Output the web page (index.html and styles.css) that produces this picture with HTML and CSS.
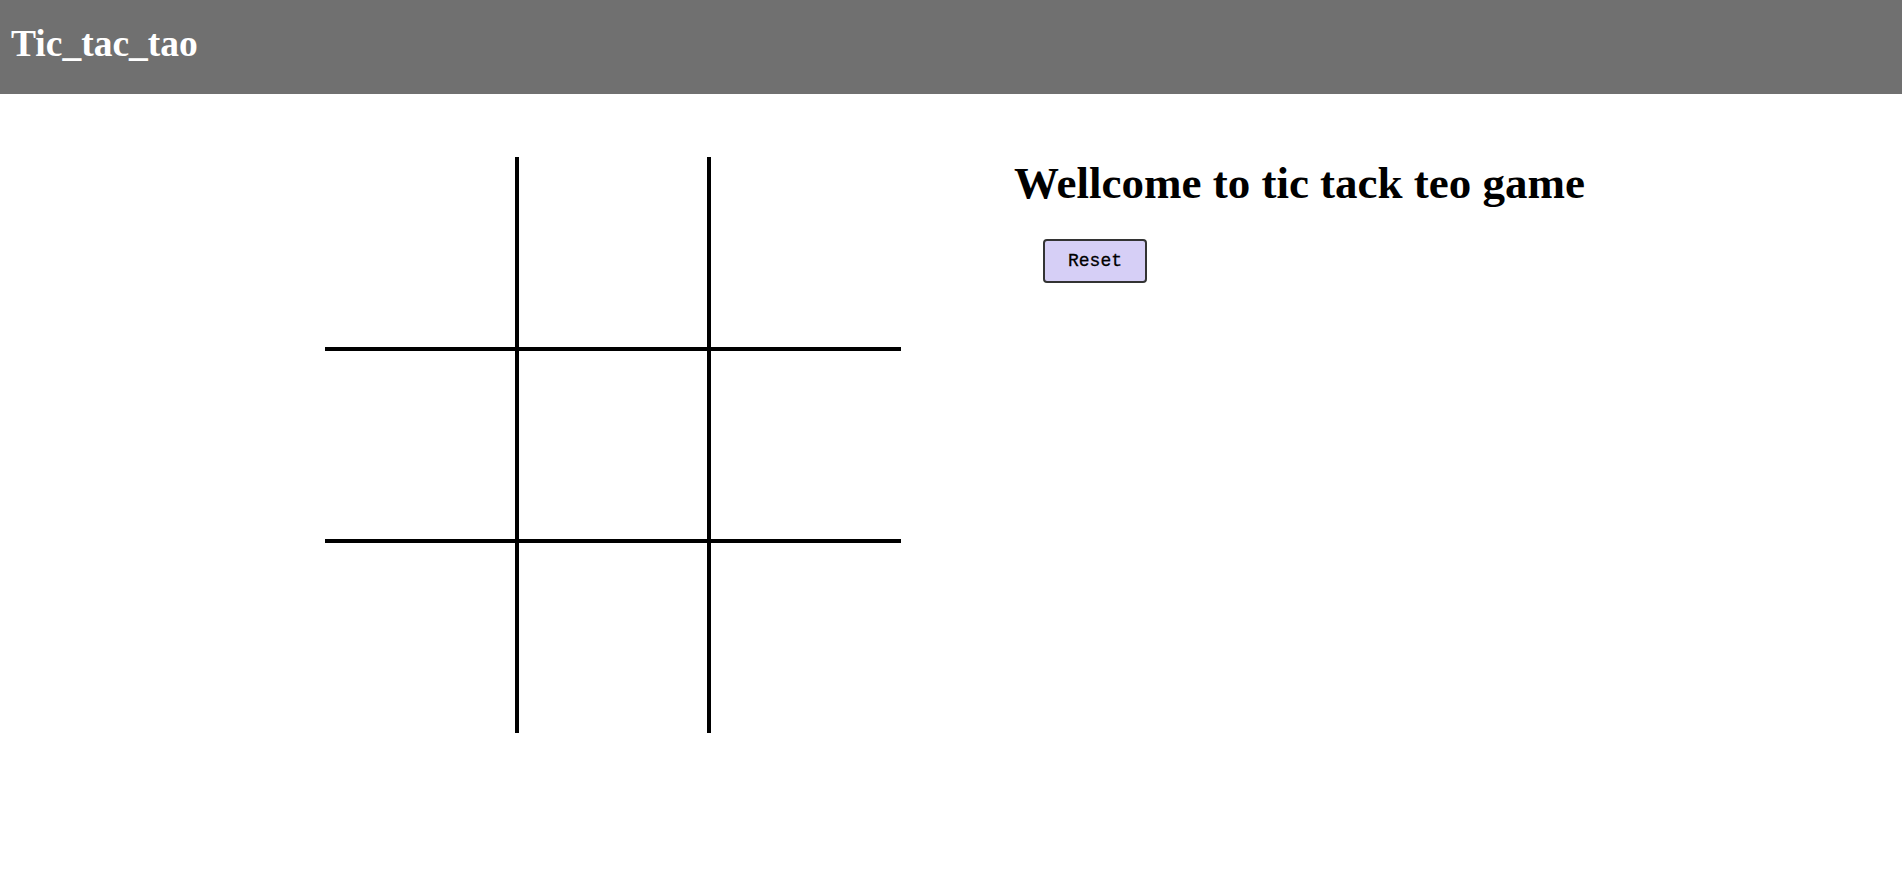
FILE: index.html
```html
<!DOCTYPE html>
<html>
<head>
<meta charset="utf-8">
<title>Tic_tac_tao</title>
<link rel="stylesheet" href="styles.css">
</head>
<body>
<header class="topbar">
  <h1 class="brand">Tic_tac_tao</h1>
</header>
<main class="main">
  <div class="board">
    <div class="box b-r b-b"></div>
    <div class="box b-l b-r b-b"></div>
    <div class="box b-l b-b"></div>
    <div class="box b-r b-t b-b"></div>
    <div class="box b-l b-r b-t b-b"></div>
    <div class="box b-l b-t b-b"></div>
    <div class="box b-r b-t"></div>
    <div class="box b-l b-r b-t"></div>
    <div class="box b-l b-t"></div>
  </div>
  <section class="info">
    <h2 class="welcome">Wellcome to tic tack teo game</h2>
    <button class="reset">Reset</button>
  </section>
</main>
</body>
</html>
```
FILE: styles.css
```css
html, body {
  margin: 0;
  padding: 0;
  background: #ffffff;
}
body {
  font-family: "Liberation Serif", "Times New Roman", serif;
}
.topbar {
  background: #707070;
  height: 94px;
  box-sizing: border-box;
  padding: 24px 0 0 11px;
}
.brand {
  margin: 0;
  color: #ffffff;
  font-size: 37.5px;
  line-height: 40px;
  font-weight: bold;
}
.main {
  display: flex;
  align-items: flex-start;
  padding: 63px 0 0 325px;
}
.board {
  display: grid;
  grid-template-columns: repeat(3, 192px);
  grid-template-rows: repeat(3, 192px);
}
.box {
  box-sizing: border-box;
  border: 0 solid #000;
}
.b-l { border-left-width: 2px; }
.b-r { border-right-width: 2px; }
.b-t { border-top-width: 2px; }
.b-b { border-bottom-width: 2px; }
.info {
  margin-left: 113px;
  display: flex;
  flex-direction: column;
  align-items: flex-start;
}
.welcome {
  margin: 0;
  font-size: 45px;
  line-height: 52px;
  font-weight: bold;
  color: #000;
}
.reset {
  margin: 30px 0 0 29px;
  width: 104px;
  height: 44px;
  box-sizing: border-box;
  background: #d6cff6;
  border: 2px solid #333333;
  border-radius: 4px;
  font-family: "Liberation Mono", "Courier New", monospace;
  font-size: 18px;
  color: #000;
  padding: 0;
  -webkit-text-stroke: 0.3px #000;
}
```
